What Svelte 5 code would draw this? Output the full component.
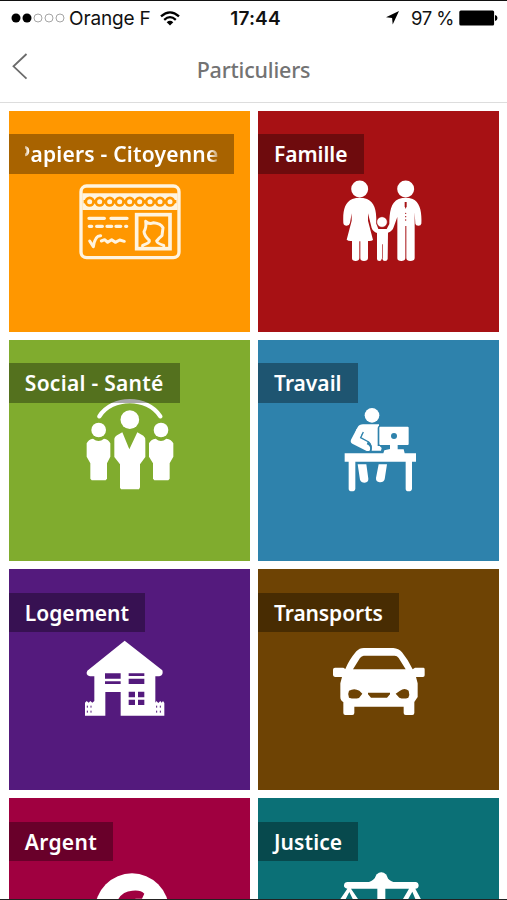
<script>
  const tiles = [
    { icon: 'card', label: 'Papiers - Citoyenne', color: '#ff9700', box: '26 17 723 663', width: 225.5, spacing: 0.22, marquee: true },
    { icon: 'family', label: 'Famille', color: '#a71114', box: '15 17 723 663', width: 106, spacing: -0.05 },
    { icon: 'social', label: 'Social - Santé', color: '#80ac2e', box: '26 14 723 663', width: 171, spacing: 0.28 },
    { icon: 'work', label: 'Travail', color: '#2e82ac', box: '15 14 723 663', width: 100, spacing: 0 },
    { icon: 'home', label: 'Logement', color: '#541a7d', box: '26 42 723 663', width: 136.5, spacing: 0 },
    { icon: 'car', label: 'Transports', color: '#6e4304', box: '15 42 723 663', width: 141, spacing: -0.1 },
    { icon: 'money', label: 'Argent', color: '#a00040', box: '26 55 723 663', width: 104.5, spacing: 0.3 },
    { icon: 'justice', label: 'Justice', color: '#0b7076', box: '15 55 723 663', width: 100.5, spacing: 0.1 }
  ];
  const rings = [268, 298, 328, 358, 388, 418, 449, 479, 509];
</script>

<div class="screen">
  <div class="status">
    <div class="carrier">
      <svg class="dots" width="54" height="12" viewBox="0 0 54 12">
        <circle cx="5" cy="6" r="4.5" /><circle cx="16" cy="6" r="4.5" />
        <g fill="none" stroke="#a5a5a5" stroke-width="1"><circle cx="27" cy="6" r="4" /><circle cx="38" cy="6" r="4" /><circle cx="49" cy="6" r="4" /></g>
      </svg>
      <span class="operator">Orange F</span>
      <svg class="wifi" width="20" height="15" viewBox="0 0 20 15">
        <g fill="none" stroke="#000" stroke-width="2.3"><path d="M1 5.3Q10-2.6 19 5.3" /><path d="M4.2 8.8Q10 3.5 15.8 8.8" /></g>
        <path d="M6.7 11.2Q10 8.3 13.3 11.2L10 14.6Z" />
      </svg>
    </div>
    <span class="time">17:44</span>
    <div class="power">
      <svg width="13" height="14" viewBox="0 0 13 14"><path d="M13 0L0 6.2L6.1 7L6.7 13.5Z" /></svg>
      <span class="percent">97 %</span>
      <svg width="39" height="16" viewBox="0 0 39 16"><rect x=".3" y=".4" width="34.8" height="15" rx="1.5" /><path d="M36 5Q38.5 5.5 38.5 8T36 11Z" /></svg>
    </div>
  </div>
  <header>
    <svg class="back" width="16" height="27" viewBox="0 0 16 27"><path d="M14.5 1L1.5 13.3L14.5 25.6" fill="none" stroke="#6b6b6b" stroke-width="1.8" /></svg>
    <h1>Particuliers</h1>
  </header>
  <main>
    {#each tiles as tile}
      <section class="tile" style="background: {tile.color}">
        <svg class="icon" viewBox={tile.box} fill="#fff">
          {#if tile.icon === 'card'}
            <path d="M246 264H532V314H246Z" fill="#fff4df" />
            <g fill="none" stroke="#fff4df" stroke-width="8" stroke-linecap="round" stroke-linejoin="round">
              <rect x="242" y="242" width="294" height="215" rx="17" stroke-width="10" />
              <path d="M266 339H312M332 339H380" stroke-width="10" />
              <path d="M267 363H274M289 363H306M320 363H334M347 363H361M376 363H379" stroke-width="10" />
              <path d="M268 407L279 424Q284 390 301 391M303 407L313 403L322 411L334 403L345 411L358 404L372 408" stroke-width="9" />
              <rect x="409" y="328" width="100" height="102" stroke-linejoin="miter" stroke-width="11" />
              <path d="M427 426V420Q450 413 447 405Q432 392 431 379Q439 366 436 348Q446 358 460 352Q481 354 488 367L485 391Q475 399 469 407Q471 415 490 420V426" stroke-width="9" />
            </g>
            <g fill="#ff9700">
              {#each rings as x}<circle cx={x} cy="289" r="15.5" />{/each}
              <path d="M250 284H528V294H250Z" />
            </g>
            <g fill="#fff4df">{#each rings as x}<circle cx={x} cy="289" r="7.500" />{/each}</g>
          {:else if tile.icon === 'family'}
            <circle cx="320" cy="251" r="25.5" /><circle cx="458" cy="251" r="25.5" />
            <path d="M298 281Q320 274 342 281C366 291 371 318 370 355L376 371H401L409 356C409 323 413 290 437 281Q458 274 479 281C501 290 507 321 505 355Q504 361 496 361Q488 361 487 355L485 321V459Q484 467 472 467Q461 467 460 459V362H457V459Q456 467 445 467Q433 467 433 459V335L423 363Q419 378 405 382L404 461Q403 467 396 467Q389 467 388 460L386 460Q386 467 379 467Q372 467 372 461V383Q360 379 356 368L345 324V346L360 404Q355 408 345 407V459Q344 467 333 467Q322 467 322 459V408H319V459Q318 467 308 467Q297 467 297 459V407Q286 408 281 403L296 346V324L291 353Q289 361 281 361Q272 361 271 353C269 317 275 291 298 281Z" />
            <circle cx="387" cy="350" r="16" stroke="#a71114" stroke-width="2" />
            <g fill="#a71114"><path d="M455 290H461V303L458 311L455 303Z" /><circle cx="458" cy="324" r="2" /><circle cx="458" cy="334" r="2" /><circle cx="458" cy="344" r="2" /><path d="M387 417H389V460H387Z" /></g>
          {:else if tile.icon === 'social'}
            <path d="M297 243C335 182 441 182 480 243" fill="none" stroke="#fff" stroke-width="13" stroke-linecap="round" />
            <circle cx="388.500" cy="253" r="28" /><circle cx="295" cy="284" r="22" /><circle cx="482" cy="284" r="22" />
            <path d="M278 310Q295 324 311 310Q325 312 330 324V364L320 384V430L316 435H274L270 430V384L259 364V324Q264 312 278 310Z" />
            <path d="M466 310Q482 324 498 310Q514 312 519 324V364L508 384V430L504 435H462L458 430V384L446 364V324Q451 312 466 310Z" />
            <path d="M366 291L387 342L411 291L429 301Q436 306 435 316V365L419 387V456L416 462H362L359 457V387L342 365V316Q341 305 350 300Z" />
          {:else if tile.icon === 'work'}
            <circle cx="357" cy="240" r="22" />
            <path d="M330 267H378V271Q374 273 374 279V332H380L386 338L384 346H356Q360 329 346 319L321 306L330 293L322 291L309 312L346 329Q356 338 349 347H341L298 325Q291 321 294 313L313 277Q319 267 330 267Z" />
            <path d="M310 282L332 282L323 304L345 317L340 330L300 320Z" />
            <path d="M331 290L323 307L347 320Q357 328 353 344" fill="none" stroke="#2e82ac" stroke-width="4" />
            <path d="M382 274H464Q467 274 467 277V326Q467 329 464 329H434V342H452L455 354H489V379H477V460Q476 468 467 468Q458 468 458 460V379H307V460Q306 468 297 468Q287 468 287 460V379H275V354H391L394 345L411 341V329H382Q379 329 379 326V277Q379 274 382 274Z" />
            <circle cx="423" cy="302" r="9" fill="#2e82ac" />
            <path d="M314 387H340L346 430Q347 440 335 442Q324 442 321 433ZM377 387H402L395 432Q392 442 380 441Q368 439 369 428Z" />
          {:else if tile.icon === 'home'}
            <path fill-rule="evenodd" d="M373 257L486 346Q491 360 477 364H465V443L468 438L474 444L480 438L484 443L488 438L492 444V482H361V411H315V482H254V443L259 438L265 443L270 438L276 443L282 438V364H269Q254 360 261 347ZM314 355H361V371H314ZM314 379H361V387H314ZM385 355H432V363H385ZM385 371H432V387H385ZM385 410H404V427H385ZM413 410H432V427H413ZM385 434H404V450H385ZM413 434H432V450H413Z" />
            <path d="M261 452V474M272 452V474M469 452V474M480 452V474" stroke="#541a7d" stroke-width="3" stroke-dasharray="6 9" />
          {:else if tile.icon === 'car'}
            <path fill-rule="evenodd" d="M335 279H421Q437 280 447 292Q466 315 479 343L486 338H512Q516 339 515 344V361Q515 366 510 366H489L494 385V426L484 441V474Q484 480 478 480H458Q452 480 452 474V455H304V474Q304 480 298 480H277Q271 480 271 474V441Q262 437 262 426V385L267 366H246Q240 365 240 360V344Q240 338 246 338H271L277 342Q288 315 310 289Q320 278 335 279ZM332 302Q326 303 321 309L300 343H458L437 309Q432 302 425 302ZM288 407Q304 398 319 407L328 416L318 429Q303 433 288 428Q283 417 288 407ZM428 416L441 407Q455 397 467 407Q471 419 466 428Q452 433 439 428ZM345 413H411V418L402 428H354L345 418Z" />
          {:else if tile.icon === 'money'}
            <circle cx="395" cy="392" r="111" />
            <path d="M353 360Q367 334 396 333Q421 330 432 342L425 357H406L380 373H353Z" fill="#a00040" />
          {:else}
            <path d="M374 286Q384 272 396 286L402 292Q406 301 421 307H487Q497 308 497 318Q496 327 487 327L510 370H492L478 336L459 370H443L468 327H397V375H373V327H294L323 370H305L289 337L272 370H254L283 327Q272 325 273 317Q274 307 284 307H348Q363 301 367 293Z" />
            <circle cx="385" cy="297" r="19" />
          {/if}
        </svg>
        <div class="label" class:marquee={tile.marquee} style="width: {tile.width}px; letter-spacing: {tile.spacing}px">
          <span>{tile.label}</span>
        </div>
      </section>
    {/each}
  </main>
</div>

<style>
  .screen { box-sizing: border-box; width: 507px; height: 900px; overflow: hidden; display: flex; flex-direction: column; background: #fff; border-top: 1.5px solid #111; border-bottom: 1px solid #222; }
  .status { height: 34px; flex: none; display: grid; grid-template-columns: 1fr auto 1fr; align-items: center; padding: 0 10px 0 11px; box-sizing: border-box; font: 19px Inter, sans-serif; color: #111; }
  .carrier, .power { display: flex; align-items: center; }
  .operator { margin-left: 4px; letter-spacing: -0.15px; white-space: nowrap; }
  .wifi { margin-left: 9px; }
  .time { font-weight: 600; letter-spacing: 0.15px; padding-left: 3px; }
  .power { justify-content: flex-end; }
  .power svg { margin-right: -1px; }
  .percent { margin: 0 5px 0 13px; white-space: nowrap; font-size: 18.5px; letter-spacing: -0.5px; }
  header { height: 68px; flex: none; box-sizing: border-box; display: grid; grid-template-columns: 60px 1fr 60px; align-items: center; border-bottom: 1px solid #ddd; }
  .back { margin: -4px 0 0 12px; }
  h1 { margin: 1px 0 0; font: 500 21.500px "Noto Sans", sans-serif; letter-spacing: -0.2px; color: #737373; text-align: center; }
  main { flex: none; display: grid; grid-template-columns: 241px 241px; grid-auto-rows: 221px; gap: 8.2px; padding: 7.5px 0 0 8.8px; }
  .tile { display: grid; overflow: hidden; }
  .icon { grid-area: 1 / 1; width: 241px; height: 221px; }
  .label { grid-area: 1 / 1; z-index: 1; align-self: start; box-sizing: border-box; height: 39.5px; margin-top: 23.700px; padding: 0 16px; background: rgba(0, 0, 0, 0.34); color: #fff; font: 600 21px/41px "Noto Sans", sans-serif; white-space: nowrap; }
  .label span { display: block; }
  .marquee span { overflow: hidden; text-indent: -7.5px; mask-image: linear-gradient(90deg, rgba(0, 0, 0, 0.5), #000 4px, #000 184px, rgba(0, 0, 0, 0.3) 194px); }
</style>
